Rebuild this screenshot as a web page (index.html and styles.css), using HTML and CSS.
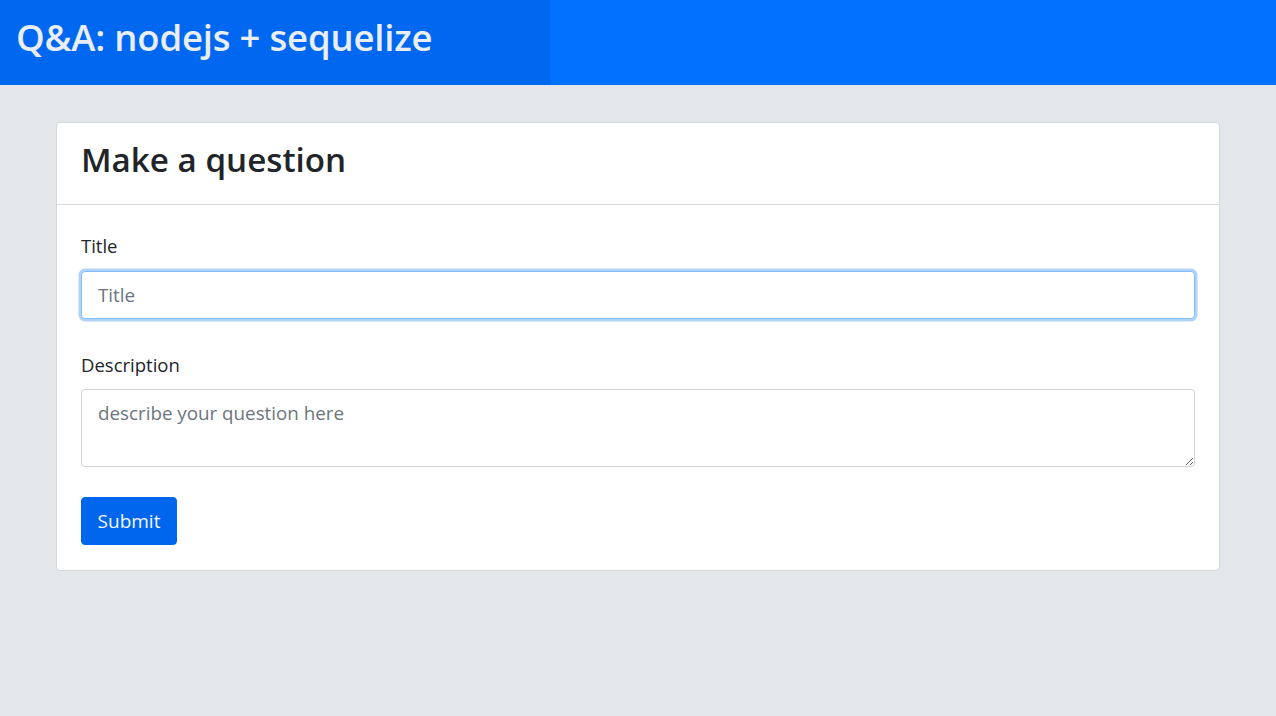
FILE: index.html
```html
<!DOCTYPE html>
<html lang="en">
<head>
<meta charset="utf-8">
<title>Q&amp;A: nodejs + sequelize</title>
<link rel="stylesheet" href="styles.css">
</head>
<body>
<header class="topbar">
  <h1 class="brand">Q&amp;A: nodejs + sequelize</h1>
</header>
<main class="container">
  <section class="card">
    <div class="card-header">
      <h2 class="card-title">Make a question</h2>
    </div>
    <form class="card-body">
      <div class="form-group">
        <label class="form-label" for="title">Title</label>
        <input class="form-control is-focused" id="title" type="text" placeholder="Title">
      </div>
      <div class="form-group form-group-desc">
        <label class="form-label" for="description">Description</label>
        <textarea class="form-control form-textarea" id="description" rows="2" placeholder="describe your question here"></textarea>
      </div>
      <button class="btn-primary" type="button">Submit</button>
    </form>
  </section>
</main>
</body>
</html>
```

FILE: styles.css
```css
* { box-sizing: border-box; }

html, body {
  margin: 0;
  padding: 0;
}

body {
  background: #e3e7ea;
  font-family: "Open Sans", "Noto Sans", "DejaVu Sans", sans-serif;
  color: #212529;
  min-height: 716px;
}

.topbar {
  height: 85px;
  background: linear-gradient(90deg, #0067f0 0, #0067f0 550px, #0070ff 550px, #0070ff 100%);
  padding: 13px 16px 0;
}

.brand {
  margin: 0;
  font-size: 36.5px;
  line-height: 48px;
  font-weight: 600;
  color: #e9eef6;
  letter-spacing: -0.2px;
}

.container {
  margin: 37px 56px 0;
}

.card {
  background: #ffffff;
  border: 1px solid #d4d7db;
  border-radius: 4px;
}

.card-header {
  height: 82px;
  border-bottom: 1px solid #d9dcdf;
  padding: 0 24px 8px;
  display: flex;
  align-items: center;
}

.card-title {
  margin: 0;
  font-size: 33.2px;
  line-height: 40px;
  font-weight: 600;
  color: #212529;
}

.card-body {
  padding: 27px 24px 25px;
  display: flex;
  flex-direction: column;
  align-items: flex-start;
}

.form-group {
  width: 100%;
  display: flex;
  flex-direction: column;
}

.form-group-desc {
  margin-top: 32px;
}

.form-label {
  font-size: 18.5px;
  line-height: 27px;
  margin-bottom: 12px;
  color: #212529;
}

.form-group-desc .form-label {
  margin-bottom: 11px;
}

.form-control {
  width: 100%;
  height: 48px;
  border: 1px solid #ced4da;
  border-radius: 4px;
  padding: 8px 16px;
  font-family: inherit;
  font-size: 18.8px;
  line-height: 30px;
  color: #495057;
  background: #fff;
  outline: none;
}

.form-control::placeholder {
  color: #6c757d;
  opacity: 1;
}

.form-control.is-focused {
  border-color: #80bdff;
  box-shadow: 0 0 0 2.5px rgba(0, 110, 230, 0.3);
}

.form-textarea {
  height: 78px;
  resize: vertical;
  display: block;
}

.btn-primary {
  margin-top: 30px;
  height: 48px;
  width: 96px;
  padding: 0;
  border: 1px solid #0065ec;
  border-radius: 4px;
  background: #0066ee;
  color: #f4f8ff;
  font-family: inherit;
  font-size: 19px;
  line-height: 30px;
  cursor: pointer;
}
```
